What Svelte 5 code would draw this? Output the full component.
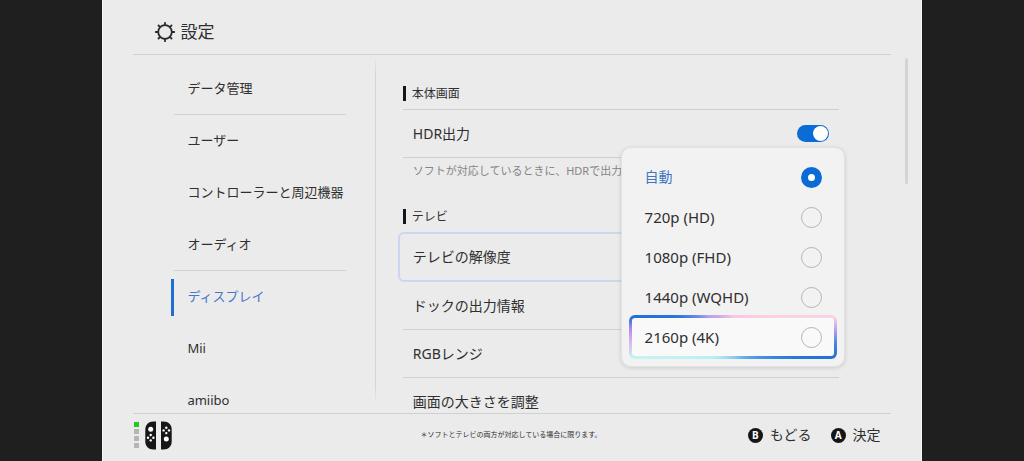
<script>
  const categories = [
    { name: 'データ管理', divider: true },
    { name: 'ユーザー' },
    { name: 'コントローラーと周辺機器' },
    { name: 'オーディオ', divider: true },
    { name: 'ディスプレイ' },
    { name: 'Mii' },
    { name: 'amiibo' }
  ];
  const options = [
    { value: 'auto', label: '自動' },
    { value: '720', label: '720p (HD)' },
    { value: '1080', label: '1080p (FHD)' },
    { value: '1440', label: '1440p (WQHD)' },
    { value: '2160', label: '2160p (4K)' }
  ];
  const rays = [0, 45, 90, 135, 180, 225, 270, 315];

  let current = $state('ディスプレイ');
  let resolution = $state('auto');
  let highlighted = $state('2160');
  let hdr = $state(true);
</script>

<div class="screen">
  <header>
    <svg class="gear" viewBox="0 0 22 22" aria-hidden="true">
      <circle cx="11" cy="11" r="6.8" />
      {#each rays as angle}
        <path d="M11 3.5V1.8" transform="rotate({angle} 11 11)" />
      {/each}
    </svg>
    <h1>設定</h1>
  </header>

  <div class="body">
    <nav>
      {#each categories as c}
        <a
          href="#settings"
          class:divider={c.divider}
          class:active={c.name === current}
          onclick={() => (current = c.name)}>{c.name}</a>
      {/each}
    </nav>

    <main>
      <h2>本体画面</h2>
      <label class="row ruled top">
        <span>HDR出力</span>
        <input class="switch" type="checkbox" bind:checked={hdr} />
      </label>
      <p class="hint">ソフトが対応しているときに、HDRで出力し</p>

      <h2>テレビ</h2>
      <div class="picker">
        <button class="row" aria-haspopup="true">テレビの解像度</button>
        <div class="menu" role="radiogroup" aria-label="テレビの解像度">
          {#each options as o}
            <label
              class="option"
              class:chosen={o.value === resolution}
              class:highlight={o.value === highlighted}>
              <span>{o.label}</span>
              <input type="radio" name="resolution" value={o.value} bind:group={resolution} />
            </label>
          {/each}
        </div>
      </div>
      <button class="row ruled">ドックの出力情報</button>
      <button class="row ruled">RGBレンジ</button>
      <button class="row">画面の大きさを調整</button>
    </main>
    <div class="scroll"></div>
  </div>

  <footer>
    <div class="pads">
      <div class="lamps"><i class="on"></i><i></i><i></i><i></i></div>
      <svg viewBox="0 0 27 29" aria-hidden="true">
        <path class="pad" d="M11 0.5V28.5H8.5C3.5 28.5 0.3 25 0.3 20.5V8.5C0.3 4 3.5 0.5 8.5 0.5Z" />
        <path class="pad" d="M16 0.5V28.5H18.5C23.5 28.5 26.7 25 26.7 20.5V8.5C26.7 4 23.5 0.5 18.5 0.5Z" />
        <circle cx="5.7" cy="8.3" r="2.5" />
        <circle cx="21.3" cy="18" r="2.5" />
        <g><circle cx="5.7" cy="14" r="1.2" /><circle cx="5.7" cy="19.4" r="1.2" /><circle cx="3" cy="16.7" r="1.2" /><circle cx="8.4" cy="16.7" r="1.2" /></g>
        <g><circle cx="21.3" cy="6.7" r="1.2" /><circle cx="21.3" cy="12.1" r="1.2" /><circle cx="18.6" cy="9.4" r="1.2" /><circle cx="24" cy="9.4" r="1.2" /></g>
      </svg>
    </div>
    <p>＊ソフトとテレビの両方が対応している場合に限ります。</p>
    <div class="actions">
      <button><b>B</b>もどる</button>
      <button><b>A</b>決定</button>
    </div>
  </footer>
</div>

<style>
  :global(body) {
    margin: 0;
    background: #1e1f1e;
  }
  .screen {
    box-sizing: border-box;
    width: 80%;
    height: 100vh;
    margin: 0 auto;
    display: grid;
    grid-template-rows: auto 1fr auto;
    background: #ebebeb;
    border: solid #f6f6f6;
    border-width: 0 1px;
    color: #2f2f2f;
    font-family: 'Noto Sans', 'Noto Sans CJK JP', sans-serif;
    font-size: 14px;
    line-height: 20px;
    overflow: hidden;
  }
  h1, h2, p {
    margin: 0;
    font-weight: 400;
  }
  button {
    font: inherit;
    color: inherit;
    background: none;
    border: 0;
    padding: 0;
    text-align: left;
    cursor: pointer;
  }
  input {
    appearance: none;
    margin: 0;
    flex: none;
    box-sizing: border-box;
  }
  header {
    margin: 0 30px;
    padding: 20px 0 10px 21px;
    display: flex;
    align-items: center;
    gap: 4px;
    border-bottom: 1px solid #d0d0d0;
  }
  .gear {
    width: 22px;
    height: 22px;
    fill: none;
    stroke: #2b2b2b;
    stroke-width: 1.8;
    stroke-linecap: round;
  }
  h1 {
    font-size: 17px;
    line-height: 24px;
  }
  .body {
    display: grid;
    grid-template-columns: 1fr 2fr;
    min-height: 0;
    overflow: hidden;
    position: relative;
  }
  nav {
    padding: 8px 30px 0 71px;
    font-size: 13px;
    background: linear-gradient(transparent, #d4d4d4 20px, #d4d4d4 330px, transparent 350px) right / 1px 100% no-repeat;
  }
  nav a {
    display: block;
    box-sizing: border-box;
    height: 52px;
    line-height: 51px;
    padding-left: 13px;
    color: inherit;
    text-decoration: none;
    white-space: nowrap;
  }
  nav .divider {
    border-bottom: 1px solid #d0d0d0;
  }
  nav .active {
    color: #4576c8;
    background: linear-gradient(#1f6fd0, #1f6fd0) left / 3px 37px no-repeat;
    margin-left: -3px;
    padding-left: 16px;
  }
  main {
    padding: 31px 82px 0 27px;
  }
  h2 {
    font-size: 12px;
    line-height: 15px;
    border-left: 3px solid #161616;
    padding-left: 6px;
    margin-bottom: 8px;
  }
  .row {
    box-sizing: border-box;
    width: 100%;
    height: 48px;
    display: flex;
    align-items: center;
    justify-content: space-between;
    padding: 0 10px;
  }
  .ruled {
    border-bottom: 1px solid #cfcfcf;
  }
  .top {
    height: 49px;
    border-top: 1px solid #cfcfcf;
  }
  .switch {
    width: 32px;
    height: 17px;
    border-radius: 9px;
    background: #999;
    padding: 1px;
    display: flex;
  }
  .switch::after {
    content: '';
    width: 15px;
    height: 15px;
    border-radius: 50%;
    background: #fff;
  }
  .switch:checked {
    background: #0b6cd6;
    justify-content: flex-end;
  }
  .hint {
    font-size: 11px;
    line-height: 26px;
    padding-left: 10px;
    margin-bottom: 25px;
    color: #858585;
    white-space: nowrap;
  }
  .picker {
    position: relative;
  }
  .picker .row {
    width: auto;
    min-width: calc(100% + 10px);
    height: 50px;
    margin: 0 -5px;
    padding: 0 13px;
    border: 2px solid #ced5ee;
    border-radius: 6px;
  }
  .menu {
    position: absolute;
    right: -6px;
    top: 50%;
    transform: translateY(-50%);
    box-sizing: border-box;
    width: 224px;
    padding: 9px 7px;
    border: 1px solid #e2e2e4;
    border-radius: 10px;
    background: #f2f2f2;
    box-shadow: 0 1px 4px rgba(0, 0, 0, 0.14);
    z-index: 1;
  }
  .option {
    box-sizing: border-box;
    height: 40px;
    display: flex;
    align-items: center;
    justify-content: space-between;
    padding: 0 12px 0 13px;
    border: 3px solid transparent;
    border-radius: 6px;
  }
  .option:not(.chosen) {
    font-size: 15px;
  }
  .chosen {
    color: #3f76c0;
  }
  .highlight {
    height: 44px;
    margin: -2px 0;
    background:
      linear-gradient(#f9f9fa, #f9f9fa) padding-box,
      conic-gradient(#f8c4e4 0deg, #fcd0e2 60deg, #fbd3e6 79deg, #b9a0ee 86deg, #3f84e4 94deg, #226fd6 102deg, #3f8be4 120deg, #8fcdf0 180deg, #b8eef2 225deg, #c4f4f0 258deg, #dcb0ee 268deg, #a88ce6 275deg, #1f70d8 281deg, #2e74dc 290deg, #b7a2ec 310deg, #f8c4e4 360deg) border-box;
  }
  .option input {
    width: 21px;
    height: 21px;
    border: 1px solid #b4b4b4;
    border-radius: 50%;
  }
  .option input:checked {
    border: 7px solid #0b6cd6;
    background: #fff;
  }
  .scroll {
    position: absolute;
    top: 3px;
    right: 13px;
    width: 3px;
    height: 126px;
    border-radius: 2px;
    background: #d4d4d4;
  }
  footer {
    margin: 0 30px;
    height: 47px;
    border-top: 1px solid #d0d0d0;
    display: grid;
    grid-template-columns: 1fr auto 1fr;
    align-items: center;
  }
  footer p {
    font-size: 7px;
    line-height: 12px;
    padding: 0 2px 6px 0;
  }
  .pads {
    display: flex;
    align-items: center;
    gap: 6px;
    padding: 0 0 5px 1px;
  }
  .pads svg {
    width: 27px;
    height: 29px;
    fill: #fff;
  }
  .pad {
    fill: #161616;
  }
  .lamps {
    display: grid;
    gap: 2px;
  }
  .lamps i {
    width: 5px;
    height: 5px;
    background: #b5b5b5;
  }
  .lamps .on {
    background: #1fcc1f;
  }
  .actions {
    display: flex;
    justify-content: flex-end;
    gap: 19px;
    padding: 0 10px 5px 0;
  }
  .actions button {
    display: flex;
    align-items: center;
    gap: 7px;
  }
  .actions b {
    width: 15px;
    height: 15px;
    border-radius: 50%;
    background: #161616;
    color: #fff;
    font-size: 10px;
    line-height: 15px;
    text-align: center;
  }
</style>
